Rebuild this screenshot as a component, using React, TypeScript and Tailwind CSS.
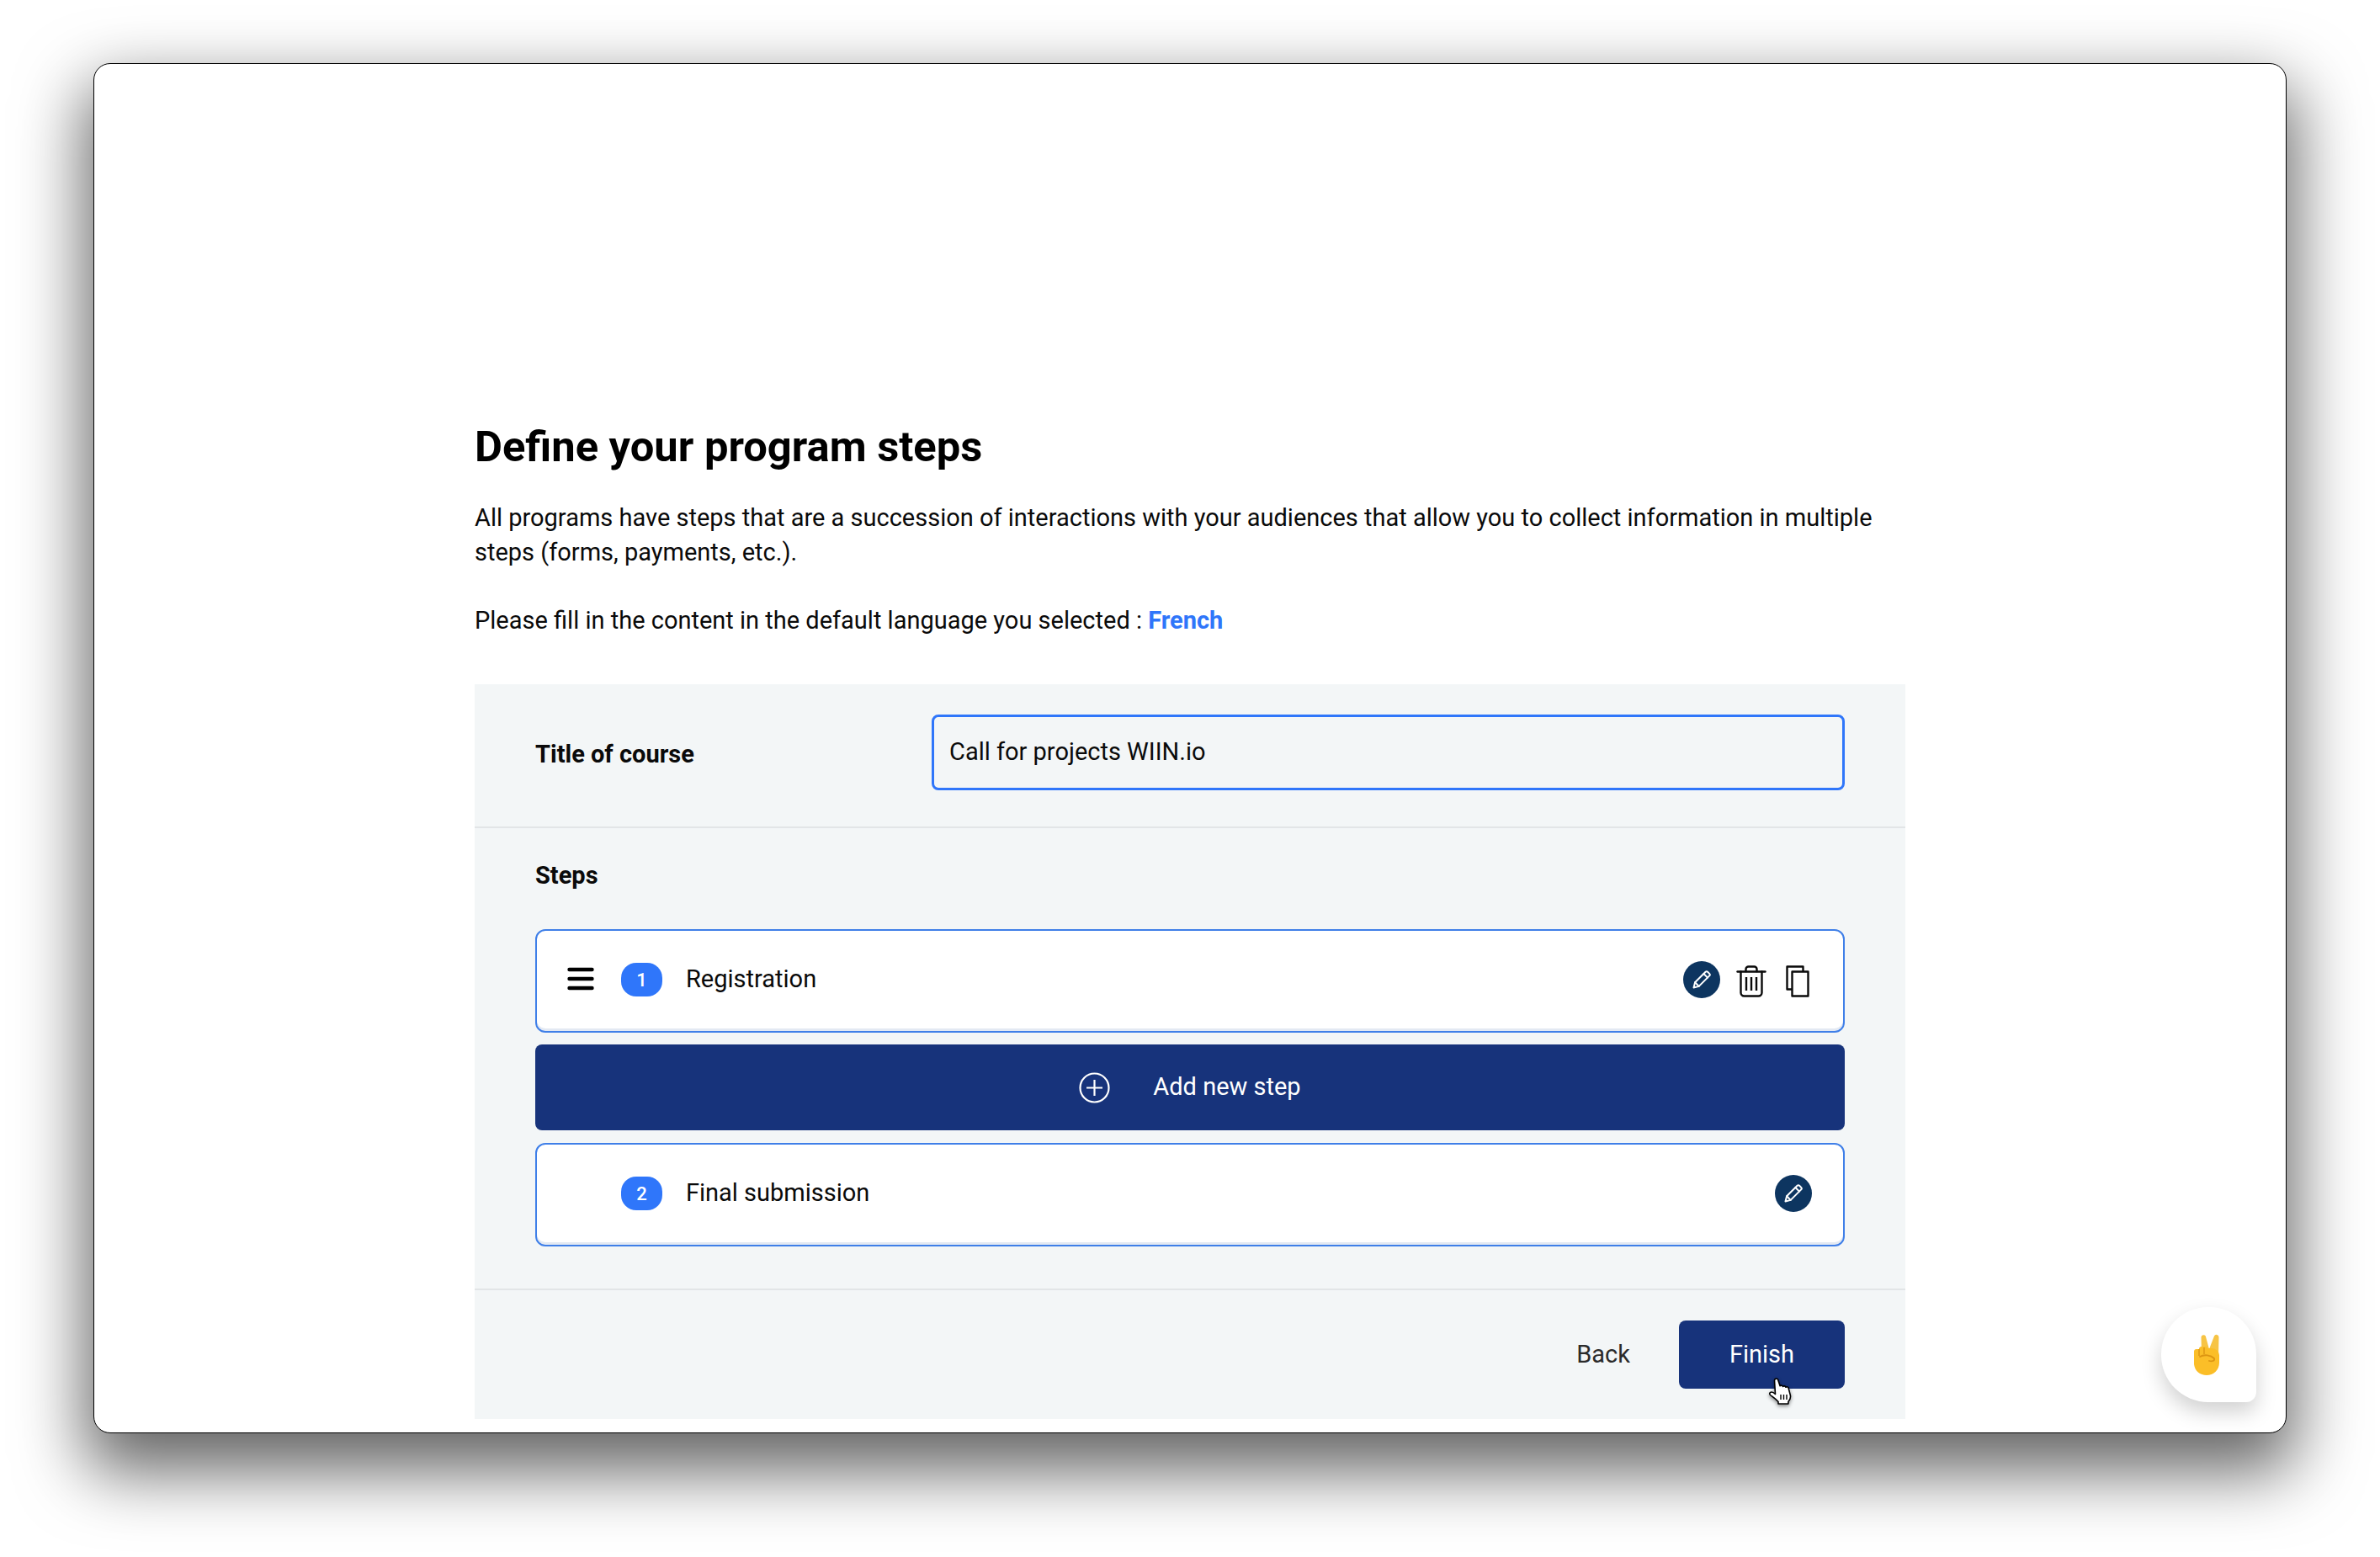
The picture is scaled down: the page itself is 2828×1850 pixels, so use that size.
import React from "react";

function Pencil() {
  return (
    <span className="flex h-[44px] w-[44px] items-center justify-center rounded-full bg-[#0d3560]">
      <svg width="24" height="24" viewBox="0 0 24 24" fill="none" stroke="#fff" strokeWidth="2" strokeLinejoin="round" strokeLinecap="round">
        <path d="M2.5 21.5l1.6-6.2L16.6 2.800a1.800 1.800 0 0 1 2.500 0l2.100 2.100a1.800 1.800 0 0 1 0 2.500L8.700 19.900z" />
        <path d="M14.400 5l4.600 4.600" />
        <path d="M4.100 15.300l4.600 4.600" />
      </svg>
    </span>
  );
}

function Trash() {
  return (
    <svg width="36" height="38" viewBox="0 0 36 38" fill="none" stroke="#0a0a0a" strokeWidth="2.4" strokeLinecap="round" strokeLinejoin="round">
      <path d="M1.500 7.500h33" />
      <path d="M11.500 7V4.500a3 3 0 0 1 3-3h7a3 3 0 0 1 3 3V7" />
      <path d="M5.500 7.500v25a4 4 0 0 0 4 4h17a4 4 0 0 0 4-4v-25" />
      <path d="M12 14v16M18 14v16M24 14v16" strokeLinecap="butt" />
    </svg>
  );
}

function Copy() {
  return (
    <svg width="28" height="38" viewBox="0 0 28 38" fill="none" stroke="#0a0a0a" strokeWidth="2.4" strokeLinejoin="round">
      <path d="M7.500 28.500H1.500V1.500h19v6" />
      <rect x="7.500" y="7.500" width="19" height="29" />
    </svg>
  );
}

function Hamburger() {
  return (
    <svg width="32" height="28" viewBox="0 0 32 28" fill="none" stroke="#000" strokeWidth="4.4" strokeLinecap="round">
      <path d="M2.500 3h27M2.500 14h27M2.500 25h27" />
    </svg>
  );
}

function Badge({ n }: { n: number }) {
  return (
    <span className="flex h-[40px] w-[49px] items-center justify-center rounded-[18px] bg-[#2f76fa] text-[22px] font-medium text-white">
      {n}
    </span>
  );
}

function PlusCircle() {
  return (
    <svg width="37" height="37" viewBox="0 0 37 37" fill="none" stroke="#fff" strokeWidth="2.200">
      <circle cx="18.500" cy="18.500" r="17" />
      <path d="M18.500 9v19M9 18.500h19" />
    </svg>
  );
}

function Victory() {
  return (
    <svg width="32" height="49" viewBox="0 0 32 49">
      <path d="M10 26 L9.500 3.500 a2.900 2.900 0 0 1 5.300-1 L19 18 L25 2.500 a2.900 2.900 0 0 1 5.500 1 L30 28z" fill="#f7c445" />
      <path d="M1 21 a3 3 0 0 1 3-3 h3 v-1 a3 3 0 0 1 3-2 h4 a3 3 0 0 1 3 2 h5 a9 9 0 0 1 9 8 v9 c0 9-7 15-15 15 c-8 0-14-5-15-13z" fill="#fbbe28" />
      <path d="M7 18v8M13 16v8" stroke="#dc9512" strokeWidth="1.400" fill="none" />
      <path d="M8 27c5-3 13-2 17 2 1 3-3 4-6 3" stroke="#dc9512" strokeWidth="1.800" fill="none" strokeLinecap="round" />
    </svg>
  );
}

function HandCursor() {
  return (
    <svg width="30" height="34" viewBox="0 0 30 34" className="drop-shadow-[0_2px_2px_rgba(0,0,0,0.45)]">
      <path
        d="M7.500 3a2.200 2.200 0 0 1 4.200-.6l2.400 7.400a2 2 0 0 1 3.400.7 2 2 0 0 1 3.400.8 2 2 0 0 1 3.300 1.200l2.200 8.500c.5 3-.6 5.500-2.500 7.500V31H12v-2.500C9 25 5 22.500 2.500 20.500c-1.500-1.500-.5-3.500 1.500-3.500 1.500 0 3 1 4.500 2.500z"
        fill="#fff"
        stroke="#000"
        strokeWidth="1.600"
        strokeLinejoin="round"
      />
      <path d="M15 20v6M18.500 20v6M22 20v6" stroke="#000" strokeWidth="1.400" />
    </svg>
  );
}

export default function App() {
  return (
    <div className="h-[1850px] w-[2828px] overflow-hidden bg-white pl-[111px] pt-[75px] font-['Roboto',sans-serif] text-[#0a0a0a]">
      <div className="relative h-[1628px] w-[2606px] rounded-[20px] border border-black bg-white pl-[452px] pt-[424px] shadow-[0_36px_80px_10px_rgba(0,0,0,0.6)]">
        <div className="w-[1700px]">
          <h1 className="pt-[1px] text-[50.7px] font-bold leading-[60px] text-black">Define your program steps</h1>

          <p className="mt-[34px] text-[29px] leading-[41px]">
            All programs have steps that are a succession of interactions with your audiences that allow you to collect information in multiple steps (forms, payments, etc.).
          </p>
          <p className="mt-[40px] text-[29px] leading-[41px]">
            Please fill in the content in the default language you selected :{" "}
            <span className="font-bold text-[#2f76fa]">French</span>
          </p>

          <div className="mt-[55px] bg-[#f3f6f7]">
            <div className="flex items-center border-b-2 border-[#e2e5e7] px-[72px] pb-[43px] pt-[36px]">
              <div className="w-[471px] pt-[5px] text-[29px] font-bold">Title of course</div>
              <div className="flex h-[90px] flex-1 items-center rounded-[8px] border-[3px] border-[#2f76fa] px-[18px] text-[29px]">
                Call for projects WIIN.io
              </div>
            </div>

            <div className="border-b-2 border-[#e2e5e7] px-[72px] pb-[50px] pt-[36px]">
              <div className="text-[29px] font-bold leading-[40px]">Steps</div>

              <div className="mt-[44px] flex h-[123px] items-center rounded-[12px] border-2 border-[#3f7fe8] bg-white pb-[3px] pl-[36px] pr-[40px] shadow-[inset_0_-3px_0_#e3e9f3]">
                <span className="mb-[3px] flex"><Hamburger /></span>
                <span className="ml-[32px]"><Badge n={1} /></span>
                <span className="ml-[28px] text-[29px]">Registration</span>
                <span className="ml-auto flex items-center gap-[20px]">
                  <span className="mr-[-1px]"><Pencil /></span>
                  <span className="mt-[3px] flex"><Trash /></span>
                  <span className="ml-[3px] mt-[3px] flex"><Copy /></span>
                </span>
              </div>

              <div className="mt-[14px] flex h-[102px] items-center justify-center rounded-[8px] bg-[#17337b] text-[29px] text-white">
                <span className="flex"><PlusCircle /></span>
                <span className="ml-[51px]">Add new step</span>
              </div>

              <div className="mt-[15px] flex h-[123px] items-center rounded-[12px] border-2 border-[#3f7fe8] bg-white pb-[3px] pl-[100px] pr-[37px] shadow-[inset_0_-3px_0_#e3e9f3]">
                <Badge n={2} />
                <span className="ml-[28px] text-[29px]">Final submission</span>
                <span className="ml-auto"><Pencil /></span>
              </div>
            </div>

            <div className="flex items-center justify-end px-[72px] pb-[36px] pt-[36px]">
              <span className="mr-[58px] text-[29px] text-[#2b2b2b]">Back</span>
              <span className="relative flex h-[81px] w-[197px] items-center justify-center rounded-[8px] bg-[#17337b] text-[29px] text-white">
                Finish
                <span className="absolute left-[106px] top-[68px]"><HandCursor /></span>
              </span>
            </div>
          </div>
        </div>

        <div className="absolute left-[2456px] top-[1477px] flex h-[113px] w-[113px] items-center justify-center rounded-bl-[56px] rounded-br-[12px] rounded-tl-[56px] rounded-tr-[56px] bg-white shadow-[0_12px_24px_rgba(0,0,0,0.18)]">
          <span className="mr-[5px] flex"><Victory /></span>
        </div>
      </div>
    </div>
  );
}
